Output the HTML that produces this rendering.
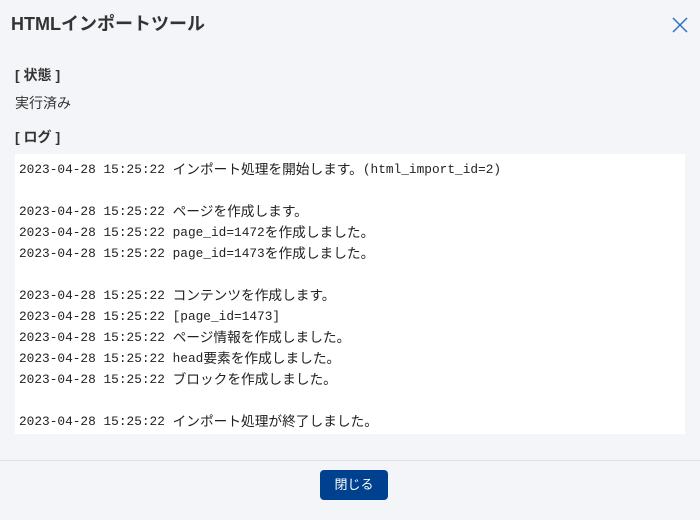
<!DOCTYPE html>
<html><head><meta charset="utf-8"><style>
body{margin:0;width:700px;height:520px;background:#f4f5f9;font-family:"Liberation Sans","Noto Sans CJK JP",sans-serif;color:#333;position:relative;overflow:hidden}
.t{position:absolute;left:11px;top:12px;font-size:18px;font-weight:bold;color:#333;line-height:24px}
.x{position:absolute;left:671px;top:16px}
.h{position:absolute;left:15px;font-size:14px;font-weight:bold;line-height:18px}
.s{position:absolute;left:15px;top:94px;font-size:14px;line-height:18px}
.log{position:absolute;left:15px;top:154px;width:670px;height:280px;background:#fff;box-sizing:border-box;padding:5px 4px;font-family:"Liberation Mono","Noto Sans CJK JP",monospace;font-size:12.8px;white-space:pre;color:#222}
.log div{height:21px;line-height:21px;overflow:hidden}
.log i{font-style:normal;font-size:13.7px;line-height:1;font-family:"Noto Sans CJK JP",sans-serif;vertical-align:-1px}
.hr{position:absolute;left:0;top:460px;width:700px;height:1px;background:#dde0e5}
.b{position:absolute;left:320px;top:470px;width:68px;height:30px;background:#00418f;border-radius:4px;color:#fff;font-size:13px;line-height:30px;text-align:center}
</style></head><body>
<div class="t">HTMLインポートツール</div>
<svg class="x" width="18" height="18" viewBox="0 0 18 18"><path d="M2 2L16 16M16 2L2 16" stroke="#2d6fc4" stroke-width="1.5" fill="none"/></svg>
<div class="h" style="top:66px">[ 状態 ]</div>
<div class="s">実行済み</div>
<div class="h" style="top:128px">[ ログ ]</div>
<div class="log"><div>2023-04-28 15:25:22 <i>インポート処理を開始します。</i>(html_import_id=2)</div><div></div><div>2023-04-28 15:25:22 <i>ページを作成します。</i></div><div>2023-04-28 15:25:22 page_id=1472<i>を作成しました。</i></div><div>2023-04-28 15:25:22 page_id=1473<i>を作成しました。</i></div><div></div><div>2023-04-28 15:25:22 <i>コンテンツを作成します。</i></div><div>2023-04-28 15:25:22 [page_id=1473]</div><div>2023-04-28 15:25:22 <i>ページ情報を作成しました。</i></div><div>2023-04-28 15:25:22 head<i>要素を作成しました。</i></div><div>2023-04-28 15:25:22 <i>ブロックを作成しました。</i></div><div></div><div>2023-04-28 15:25:22 <i>インポート処理が終了しました。</i></div></div>
<div class="hr"></div>
<div class="b">閉じる</div>
</body></html>
